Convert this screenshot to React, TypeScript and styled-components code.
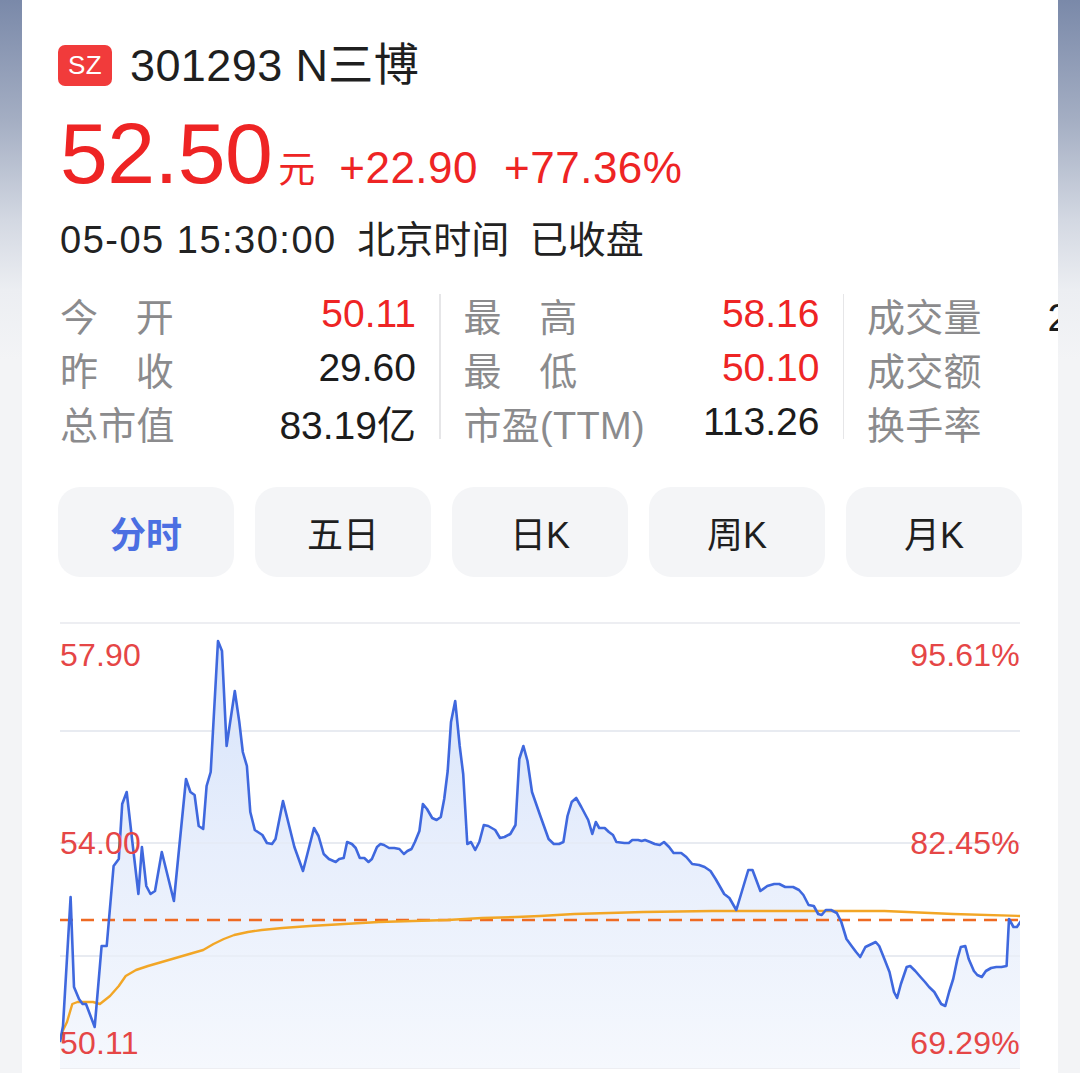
import React from "react";
import styled, { createGlobalStyle } from "styled-components";

const GlobalStyle = createGlobalStyle`
  html, body {
    margin: 0;
    padding: 0;
    background: #f3f4f6;
  }
  body {
    font-family: "Liberation Sans", "Noto Sans CJK SC", sans-serif;
    color: #1f1f1f;
  }
`;

const RED = "#ee2424";
const LABEL_RED = "#e54646";

const Page = styled.div`
  display: flex;
  min-height: 1073px;
  padding: 0 22px;
  box-sizing: border-box;
  background: linear-gradient(
    to bottom,
    #7a89a9 0px,
    #a4aec3 120px,
    #d3d8e2 220px,
    #eceef2 290px,
    #f3f4f6 360px,
    #f3f4f6 100%
  );
`;

const Card = styled.main`
  flex: 1;
  min-width: 0;
  background: #ffffff;
  overflow: hidden;
  padding: 45px 0 0 38px;
  box-sizing: border-box;
`;

const TitleRow = styled.div`
  display: flex;
  align-items: center;
  height: 41px;
`;

const Badge = styled.span`
  display: flex;
  align-items: center;
  justify-content: center;
  width: 54px;
  height: 41px;
  margin-left: -2px;
  border-radius: 7px;
  background: #f13b3b;
  color: #ffffff;
  font-size: 26px;
  letter-spacing: 0.5px;
`;

const StockName = styled.h1`
  margin: 0 0 0 18px;
  font-size: 45px;
  font-weight: 400;
  line-height: 41px;
  letter-spacing: 0.4px;
  color: #1f1f1f;
`;

const PriceRow = styled.div`
  display: flex;
  align-items: baseline;
  margin-top: 25px;
  height: 84px;
  color: ${RED};
`;

const Price = styled.span`
  font-size: 86px;
  line-height: 84px;
  letter-spacing: -0.6px;
`;

const Unit = styled.span`
  font-size: 37px;
  margin-left: 6px;
`;

const Change = styled.span<{ $gap: number }>`
  font-size: 44px;
  margin-left: ${(p) => p.$gap}px;
  letter-spacing: 0.5px;
`;

const TimeRow = styled.div`
  margin-top: 23px;
  font-size: 38px;
  line-height: 44px;
  color: #222222;
  word-spacing: 10px;
  white-space: nowrap;
`;

const TimeStamp = styled.span`
  letter-spacing: 1.5px;
  word-spacing: 0;
`;

const Stats = styled.div`
  display: flex;
  margin-top: 25px;
`;

const StatColumn = styled.div`
  flex: 0 0 356px;
  display: flex;
  flex-direction: column;
`;

const StatRow = styled.div`
  display: flex;
  align-items: center;
  justify-content: space-between;
  height: 54px;
  white-space: nowrap;
`;

const StatLabel = styled.span<{ $spread?: boolean }>`
  display: flex;
  justify-content: ${(p) => (p.$spread ? "space-between" : "flex-start")};
  width: ${(p) => (p.$spread ? "114px" : "auto")};
  font-size: 38px;
  color: #8b8b8d;
  letter-spacing: 0.3px;
`;

const StatValue = styled.span<{ $up?: boolean }>`
  font-size: 39px;
  color: ${(p) => (p.$up ? RED : "#1c1c1c")};
`;

const Divider = styled.div`
  flex: 0 0 1.5px;
  background: #e6e6e8;
  margin: 7px 23px 10px 23px;
`;

const Tabs = styled.nav`
  display: grid;
  grid-template-columns: repeat(5, 176px);
  column-gap: 21px;
  margin: 38px 0 0 -2px;
`;

const Tab = styled.button<{ $active?: boolean }>`
  height: 90px;
  border: none;
  border-radius: 22px;
  background: #f4f5f7;
  font-family: inherit;
  font-size: 36px;
  font-weight: ${(p) => (p.$active ? 700 : 400)};
  color: ${(p) => (p.$active ? "#4b6fe2" : "#1f1f1f")};
  padding: 0;
`;

const ChartBox = styled.section`
  position: relative;
  width: 960px;
  height: 448px;
  margin-top: 45px;
`;

const ChartSvg = styled.svg`
  display: block;
  width: 960px;
  height: 448px;
`;

const LabelLayer = styled.div`
  position: absolute;
  inset: 0;
  display: flex;
  flex-direction: column;
  pointer-events: none;
`;

const LabelRow = styled.div<{ $top: number }>`
  display: flex;
  justify-content: space-between;
  margin-top: ${(p) => p.$top}px;
  height: 32px;
  font-size: 32px;
  line-height: 32px;
  color: ${LABEL_RED};
  letter-spacing: 0.2px;
`;

const X0 = 60;
const Y0 = 623;

const pricePts: [number, number][] = [
  [60, 1043], [63, 1027], [70.6, 898], [74, 988], [79, 1000], [82.6, 1005], [86, 1005], [94.7, 1028],
  [101.6, 947], [106.7, 947], [113.6, 867], [118.8, 860], [122.2, 805], [126.7, 793], [132.6, 845],
  [138.4, 895], [141.9, 848], [146.3, 887], [150.5, 895], [155, 892], [161.8, 853], [173.9, 902],
  [186, 780], [190.4, 793], [194.6, 796], [198.7, 827], [203.2, 830], [206.6, 787], [210.7, 773],
  [218, 642], [222, 652], [226.6, 747], [234.8, 692], [239.3, 723], [242.8, 753], [246.9, 767],
  [250.3, 813], [254.8, 831], [262.4, 836], [266.9, 844], [272, 845], [275.5, 840], [283, 802],
  [294.4, 848], [303, 872], [314, 829], [318.5, 837], [323.7, 855], [328.9, 860], [335.7, 863],
  [339.2, 860], [343.7, 859], [347.1, 843], [351.9, 845], [355.7, 849], [359.8, 859], [364.3, 859],
  [368.5, 863], [371.9, 860], [377, 848], [380.5, 845], [384, 846], [389.1, 849], [394.3, 849],
  [399.4, 850], [403.9, 855], [407.4, 852], [411.5, 850], [414.9, 843], [419.4, 832], [422.9, 805],
  [427, 810], [432.2, 819], [436.6, 821], [440.8, 818], [444.2, 800], [447.7, 772], [451, 723],
  [455.2, 702], [459.7, 747], [463.2, 775], [467.3, 845], [471, 843], [475.2, 851], [479.3, 843],
  [483.8, 826], [488.3, 827], [495.2, 831], [500, 839], [504.5, 838], [510.3, 835], [515.5, 826],
  [519.3, 760], [523.4, 747], [527.5, 762], [532, 793], [540, 816], [548.6, 840], [553.8, 845],
  [559, 845], [563.4, 843], [567.5, 817], [571.7, 803], [576.2, 799], [581.3, 808], [588.2, 821],
  [592.3, 835], [595.8, 823], [599.2, 829], [604.7, 829], [608.9, 833], [613, 836], [616.4, 843],
  [624.4, 844], [628.8, 844], [632.3, 841], [638.1, 841], [641.6, 842], [645, 841], [650.2, 843],
  [654.7, 845], [659.8, 846], [664, 843], [669.1, 848], [673.6, 854], [681.2, 854], [686.3, 858],
  [692.2, 865], [699.1, 866], [704.6, 868], [710.5, 872], [715.6, 880], [724.2, 895], [729.4, 899],
  [736.3, 911], [743.2, 888], [748.3, 871], [752.5, 871], [760.4, 892], [767.3, 887], [774.2, 885],
  [779.3, 885], [785.2, 888], [793.1, 888], [799, 891], [803.4, 896], [808.6, 906], [813.8, 907],
  [818.2, 915], [821.7, 916], [825.8, 911], [831, 911], [836.8, 914], [841.3, 923], [846.5, 940],
  [851.6, 947], [856.1, 953], [860.2, 958], [865.4, 948], [875.7, 943], [879.2, 947], [884.4, 960],
  [889.5, 973], [894, 993], [897.1, 999], [900.9, 985], [906.7, 968], [910.2, 967], [915.3, 972],
  [920.5, 978], [925, 983], [929.1, 988], [934.3, 993], [941.2, 1005], [945.3, 1007], [949.1, 993],
  [953.2, 980], [957.4, 960], [960.8, 948], [965.3, 947], [968.7, 960], [973.9, 972], [977.3, 976],
  [981.8, 978], [985.9, 972], [991.1, 969], [996.3, 968], [1001.4, 968], [1006.6, 967], [1009, 920],
  [1013.5, 928], [1016.9, 928], [1021, 922],
];

const avgPts: [number, number][] = [
  [58.5, 1045], [62.7, 1032], [67, 1023], [72.3, 1005], [77.5, 1003], [84.4, 1003], [93, 1003],
  [99.9, 1005], [110, 997], [118.8, 987], [125.7, 977], [136, 971], [148, 967], [161.8, 963],
  [179, 958], [192.8, 954], [203.2, 951], [213.5, 945], [223.8, 940], [234.2, 936], [248, 933],
  [261.7, 931], [282.4, 929], [310, 927], [344.4, 925], [378.8, 923], [413.2, 922], [447.7, 921],
  [482, 919], [516.5, 918], [540, 917], [574.4, 915], [643.3, 913], [712.2, 912], [781, 912],
  [832.7, 912], [884.4, 912], [953.2, 915], [1021, 917],
];

const toLocal = (pts: [number, number][]) =>
  pts.map(([x, y]) => `${(x - X0).toFixed(1)},${(y - Y0).toFixed(1)}`).join(" ");

const priceLine = toLocal(pricePts);
const avgLine = toLocal(avgPts);
const areaPoly = `${priceLine} ${(1021 - X0).toFixed(1)},446 0,446`;

const gridYs = [1, 109, 221, 334, 446];

const stats = [
  [
    { label: "今开", spread: true, value: "50.11", up: true },
    { label: "昨收", spread: true, value: "29.60" },
    { label: "总市值", value: "83.19亿" },
  ],
  [
    { label: "最高", spread: true, value: "58.16", up: true },
    { label: "最低", spread: true, value: "50.10", up: true },
    { label: "市盈(TTM)", value: "113.26" },
  ],
  [
    { label: "成交量", value: "24.93万手" },
    { label: "成交额", value: "13.68亿" },
    { label: "换手率", value: "81.47%" },
  ],
];

const tabs = ["分时", "五日", "日K", "周K", "月K"];

export default function App() {
  return (
    <>
      <GlobalStyle />
      <Page>
        <Card>
          <TitleRow>
            <Badge>SZ</Badge>
            <StockName>301293 N三博</StockName>
          </TitleRow>

          <PriceRow>
            <Price>52.50</Price>
            <Unit>元</Unit>
            <Change $gap={24}>+22.90</Change>
            <Change $gap={26}>+77.36%</Change>
          </PriceRow>

          <TimeRow>
            <TimeStamp>05-05 15:30:00</TimeStamp> 北京时间 已收盘
          </TimeRow>

          <Stats>
            {stats.map((col, ci) => (
              <React.Fragment key={ci}>
                {ci > 0 && <Divider />}
                <StatColumn>
                  {col.map((s) => (
                    <StatRow key={s.label}>
                      <StatLabel $spread={s.spread}>
                        {s.spread
                          ? s.label.split("").map((ch) => <span key={ch}>{ch}</span>)
                          : s.label}
                      </StatLabel>
                      <StatValue $up={s.up}>{s.value}</StatValue>
                    </StatRow>
                  ))}
                </StatColumn>
              </React.Fragment>
            ))}
          </Stats>

          <Tabs>
            {tabs.map((t, i) => (
              <Tab key={t} $active={i === 0}>
                {t}
              </Tab>
            ))}
          </Tabs>

          <ChartBox>
            <ChartSvg viewBox="0 0 960 448">
              <defs>
                <linearGradient id="areaFill" x1="0" y1="0" x2="0" y2="446" gradientUnits="userSpaceOnUse">
                  <stop offset="0" stopColor="#d4e2fa" />
                  <stop offset="0.5" stopColor="#e7eefc" />
                  <stop offset="1" stopColor="#f5f8fd" />
                </linearGradient>
              </defs>
              {gridYs.map((y) => (
                <line key={y} x1="0" x2="960" y1={y} y2={y} stroke="#e7e9ee" strokeWidth="1.5" />
              ))}
              <polygon points={areaPoly} fill="url(#areaFill)" />
              {gridYs.slice(1, 4).map((y) => (
                <line key={`o${y}`} x1="0" x2="960" y1={y} y2={y} stroke="#e3e7ef" strokeWidth="1.2" opacity="0.8" />
              ))}
              <line x1="0" x2="960" y1="298" y2="298" stroke="#ee6a22" strokeWidth="2.6" strokeDasharray="13 8" />
              <polyline points={avgLine} fill="none" stroke="#f2a626" strokeWidth="2.4" strokeLinejoin="round" />
              <polyline points={priceLine} fill="none" stroke="#3f68de" strokeWidth="2.6" strokeLinejoin="round" />
            </ChartSvg>
            <LabelLayer>
              <LabelRow $top={17}>
                <span>57.90</span>
                <span>95.61%</span>
              </LabelRow>
              <LabelRow $top={156}>
                <span>54.00</span>
                <span>82.45%</span>
              </LabelRow>
              <LabelRow $top={168}>
                <span>50.11</span>
                <span>69.29%</span>
              </LabelRow>
            </LabelLayer>
          </ChartBox>
        </Card>
      </Page>
    </>
  );
}
